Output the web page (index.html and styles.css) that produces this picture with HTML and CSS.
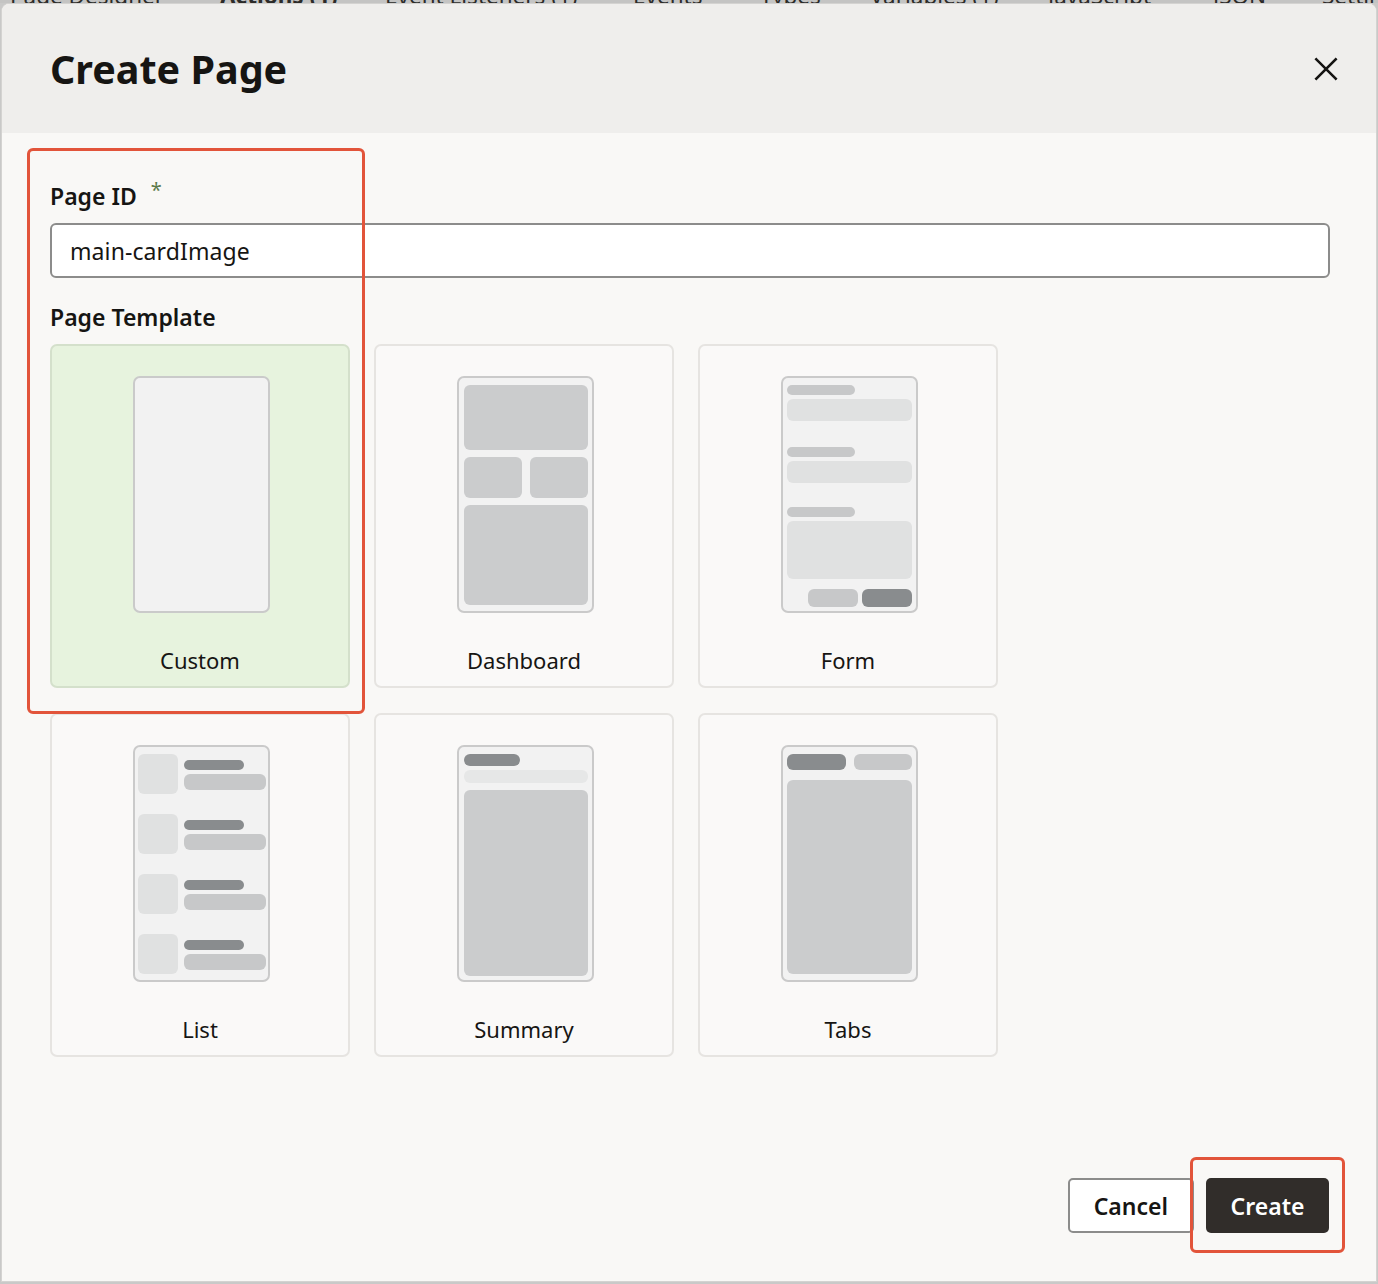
FILE: index.html
```html
<!DOCTYPE html>
<html lang="en">
<head>
<meta charset="utf-8">
<title>Create Page</title>
<link rel="stylesheet" href="styles.css">
</head>
<body>
<div class="tabs">
  <span class="tab t1">Page Designer</span>
  <span class="tab t2 bold">Actions (1)</span>
  <span class="tab t3">Event Listeners (1)</span>
  <span class="tab t4">Events</span>
  <span class="tab t5">Types</span>
  <span class="tab t6">Variables (1)</span>
  <span class="tab t7">JavaScript</span>
  <span class="tab t8">JSON</span>
  <span class="tab t9">Settings</span>
</div>
<div class="dialog">
  <header class="dlg-head">
    <h1 class="dlg-title">Create Page</h1>
    <button class="close" aria-label="Close">
      <svg width="24" height="24" viewBox="0 0 24 24"><path d="M2.3 2.3 L21.7 21.7 M21.7 2.3 L2.3 21.7" stroke="#161513" stroke-width="2.6" stroke-linecap="square" fill="none"/></svg>
    </button>
  </header>
  <main class="dlg-body">
    <div class="field-label">Page ID <span class="req">*</span></div>
    <div class="input">main-cardImage</div>
    <div class="field-label section">Page Template</div>
    <div class="grid">
      <div class="card selected">
        <div class="pv pv-custom"></div>
        <div class="card-label">Custom</div>
      </div>
      <div class="card">
        <div class="pv pv-dash">
          <div class="b dash-top"></div>
          <div class="dash-mid"><div class="b"></div><div class="b"></div></div>
          <div class="b dash-bot"></div>
        </div>
        <div class="card-label">Dashboard</div>
      </div>
      <div class="card">
        <div class="pv pv-form">
          <div class="f-lab"></div>
          <div class="f-field f1"></div>
          <div class="f-lab"></div>
          <div class="f-field f2"></div>
          <div class="f-lab"></div>
          <div class="f-area"></div>
          <div class="f-btns"><div class="f-btn light"></div><div class="f-btn dark"></div></div>
        </div>
        <div class="card-label">Form</div>
      </div>
      <div class="card">
        <div class="pv pv-list">
          <div class="l-row"><div class="l-sq"></div><div class="l-txt"><div class="l-1"></div><div class="l-2"></div></div></div>
          <div class="l-row"><div class="l-sq"></div><div class="l-txt"><div class="l-1"></div><div class="l-2"></div></div></div>
          <div class="l-row"><div class="l-sq"></div><div class="l-txt"><div class="l-1"></div><div class="l-2"></div></div></div>
          <div class="l-row"><div class="l-sq"></div><div class="l-txt"><div class="l-1"></div><div class="l-2"></div></div></div>
        </div>
        <div class="card-label">List</div>
      </div>
      <div class="card">
        <div class="pv pv-sum">
          <div class="s-bar"></div>
          <div class="s-light"></div>
          <div class="b s-block"></div>
        </div>
        <div class="card-label">Summary</div>
      </div>
      <div class="card">
        <div class="pv pv-tabs">
          <div class="t-row"><div class="t-tab dark"></div><div class="t-tab light"></div></div>
          <div class="b t-block"></div>
        </div>
        <div class="card-label">Tabs</div>
      </div>
    </div>
  </main>
  <footer class="dlg-foot">
    <button class="btn btn-cancel">Cancel</button>
    <button class="btn btn-create">Create</button>
  </footer>
</div>
<div class="annot annot-fields"></div>
<div class="annot annot-create"></div>
</body>
</html>
```
FILE: styles.css
```css
* { box-sizing: border-box; }
html, body { margin: 0; padding: 0; }
body {
  width: 1378px;
  height: 1284px;
  overflow: hidden;
  background: #c9c9c8;
  font-family: "Noto Sans", "Open Sans", sans-serif;
  color: #161513;
  position: relative;
}

.tabs {
  height: 3px;
  overflow: hidden;
  display: flex;
  align-items: flex-end;
  background: #c4c4c3;
  padding-left: 10px;
}
.tab {
  font-size: 22.5px;
  line-height: 15px;
  color: #2c2b29;
  white-space: nowrap;
  flex: none;
}
.tab.bold { font-weight: 700; }
.t1 { width: 210px; }
.t2 { width: 165px; }
.t3 { width: 248px; }
.t4 { width: 127px; }
.t5 { width: 110px; }
.t6 { width: 178px; }
.t7 { width: 165px; }
.t8 { width: 109px; }

.dialog {
  margin: 0 1px;
  height: 1279px;
  border: 1px solid #d4d3d1;
  border-radius: 8px 8px 0 0;
  background: #f9f8f6;
  display: flex;
  flex-direction: column;
  overflow: hidden;
}

.dlg-head {
  height: 129px;
  flex: none;
  background: #efeeec;
  display: flex;
  align-items: center;
  justify-content: space-between;
  padding: 0 38px 0 48px;
}
.dlg-title {
  margin: 0;
  font-size: 39.5px;
  line-height: 50px;
  font-weight: 700;
}
.close {
  width: 24px;
  height: 24px;
  padding: 0;
  border: 0;
  background: transparent;
  display: block;
}
.close svg { display: block; }

.dlg-body {
  flex: 1;
  padding: 48px 46px 0 48px;
}
.field-label {
  font-size: 23px;
  line-height: 30px;
  font-weight: 600;
}
.field-label.section { margin-top: 24px; }
.req {
  color: #5c7a4a;
  font-weight: 400;
  font-size: 20px;
  margin-left: 8px;
  position: relative;
  top: -8px;
}
.input {
  margin-top: 10px;
  height: 55px;
  border: 2px solid #8c8c8b;
  border-radius: 6px;
  background: #ffffff;
  padding: 0 18px;
  display: flex;
  align-items: center;
  font-size: 23px;
  letter-spacing: 0.1px;
}

.grid {
  margin-top: 12px;
  display: grid;
  grid-template-columns: repeat(3, 300px);
  column-gap: 24px;
  row-gap: 25px;
}
.card {
  height: 344px;
  border: 2px solid #e6e4e1;
  border-radius: 7px;
  background: #faf9f8;
  display: flex;
  flex-direction: column;
  align-items: center;
  padding-top: 30px;
}
.card.selected {
  background: #e7f3de;
  border-color: #d4e0cb;
}
.card-label {
  margin-top: 32px;
  font-size: 22px;
  line-height: 30px;
}

.pv {
  width: 137px;
  height: 237px;
  margin-left: 3px;
  border: 2px solid #cacaca;
  border-radius: 7px;
  background: #f2f2f2;
  display: flex;
  flex-direction: column;
}
.b { background: #cbcccd; border-radius: 6px; }

.pv-dash { padding: 7px 4px 6px 5px; gap: 7px; }
.dash-top { height: 65px; }
.dash-mid { height: 41px; display: flex; gap: 8px; }
.dash-mid .b { flex: 1; }
.dash-bot { flex: 1; }

.pv-form { padding: 7px 4px 4px 4px; }
.f-lab { width: 68px; height: 10px; border-radius: 5px; background: #c7c8c9; margin-bottom: 4px; }
.f-field { height: 22px; border-radius: 6px; background: #e0e1e1; }
.f1 { margin-bottom: 26px; }
.f2 { margin-bottom: 24px; }
.f-area { height: 58px; border-radius: 6px; background: #e0e1e1; margin-bottom: 10px; }
.f-btns { display: flex; justify-content: flex-end; gap: 4px; }
.f-btn { width: 50px; height: 18px; border-radius: 6px; }
.f-btn.light { background: #c7c8c9; }
.f-btn.dark { background: #898c8e; }

.pv-list { padding: 7px 3px 6px 3px; gap: 20px; }
.l-row { display: flex; height: 40px; }
.l-sq { width: 40px; height: 40px; border-radius: 6px; background: #e0e1e1; flex: none; }
.l-txt { margin-left: 6px; padding-top: 6px; flex: 1; }
.l-1 { width: 60px; height: 10px; border-radius: 5px; background: #898c8e; }
.l-2 { width: 82px; height: 16px; border-radius: 6px; background: #c7c8c9; margin-top: 4px; }

.pv-sum { padding: 7px 4px 4px 5px; }
.s-bar { width: 56px; height: 12px; border-radius: 6px; background: #898c8e; }
.s-light { height: 13px; border-radius: 6px; background: #e6e7e7; margin-top: 4px; }
.s-block { flex: 1; margin-top: 7px; }

.pv-tabs { padding: 7px 4px 6px 4px; }
.t-row { display: flex; gap: 8px; height: 16px; }
.t-tab { flex: 1; border-radius: 6px; }
.t-tab.dark { background: #898c8e; }
.t-tab.light { background: #c7c8c9; }
.t-block { flex: 1; margin-top: 10px; }

.dlg-foot {
  flex: none;
  display: flex;
  justify-content: flex-end;
  gap: 12px;
  padding: 0 47px 48px 0;
}
.btn {
  height: 55px;
  border-radius: 5px;
  font-family: "Noto Sans", "Open Sans", sans-serif;
  font-size: 23px;
  font-weight: 600;
  padding: 0 24px;
  cursor: pointer;
}
.btn-cancel {
  background: #ffffff;
  border: 2px solid #8c8c8b;
  color: #161513;
}
.btn-create {
  background: #312d2a;
  border: 0;
  color: #ffffff;
  width: 123px;
}

.annot {
  position: absolute;
  border: 3px solid #e2543a;
  border-radius: 6px;
  pointer-events: none;
}
.annot-fields {
  left: 27px;
  top: 148px;
  width: 338px;
  height: 566px;
}
.annot-create {
  left: 1190px;
  top: 1157px;
  width: 155px;
  height: 96px;
}
```
